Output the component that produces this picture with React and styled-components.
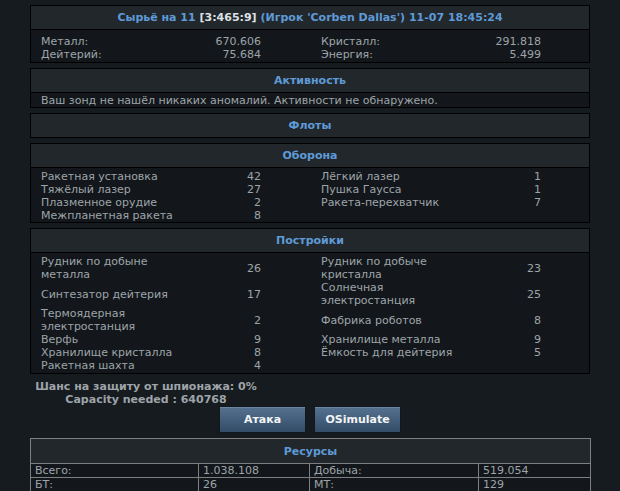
import React from 'react'
import styled, { createGlobalStyle } from 'styled-components'

const GlobalStyle = createGlobalStyle`
  html, body {
    margin: 0;
    padding: 0;
    background: #161b1f;
  }
  body {
    font-family: "DejaVu Sans", Verdana, sans-serif;
    font-size: 11px;
    color: #9ea4a9;
  }
`

const Page = styled.div`
  width: 560px;
  margin-left: 30px;
  padding-top: 5px;
  display: flex;
  flex-direction: column;
`

const Panel = styled.section`
  border: 1px solid #000;
  background: #13171b;
  margin-bottom: 5px;
`

const PanelHeader = styled.div`
  height: 23px;
  line-height: 23px;
  background: #22272c;
  text-align: center;
  font-weight: bold;
  color: #5e9ad6;

  span {
    color: #dde1e4;
  }
`

const PanelBody = styled.div`
  border-top: 1px solid #000;
  padding: ${p => p.$pad || '1px 0 0'};
  padding-left: 10px;
  line-height: 13px;
`

const StatGrid = styled.div`
  display: grid;
  grid-template-columns: 140px 80px 200px 80px;
  align-items: center;
`

const Label = styled.div`
  padding-left: ${p => (p.$second ? '60px' : '0')};
`

const Value = styled.div`
  text-align: right;
`

const Notes = styled.div`
  width: 232px;
  text-align: center;
  font-weight: bold;
  line-height: 13px;
  padding-top: 1px;
`

const ButtonRow = styled.div`
  display: flex;
  justify-content: center;
  gap: 8px;
  margin-bottom: 5px;
`

const Button = styled.button`
  width: 87px;
  height: 27px;
  padding: 0;
  border: 1px solid #101820;
  background: linear-gradient(#557290, #334c67);
  box-shadow: inset 0 1px 0 rgba(255, 255, 255, 0.15);
  color: #f2f4f6;
  font-family: "DejaVu Sans", Verdana, sans-serif;
  font-size: 11px;
  font-weight: bold;
  cursor: pointer;
`

const ResTable = styled.table`
  width: 560px;
  border-collapse: collapse;
  table-layout: fixed;
  border: 1px solid #7d7f81;
  background: #13171b;
  line-height: 13px;

  th {
    height: 24px;
    background: #22272c;
    color: #5e9ad6;
    font-weight: bold;
    border: 1px solid #7d7f81;
    padding: 0;
  }

  td {
    border: 1px solid #7d7f81;
    padding: 0 4px;
    text-align: left;
    font-weight: normal;
  }
`

const resources = [
  ['Металл:', '670.606', 'Кристалл:', '291.818'],
  ['Дейтерий:', '75.684', 'Энергия:', '5.499'],
]

const defense = [
  ['Ракетная установка', '42', 'Лёгкий лазер', '1'],
  ['Тяжёлый лазер', '27', 'Пушка Гаусса', '1'],
  ['Плазменное орудие', '2', 'Ракета-перехватчик', '7'],
  ['Межпланетная ракета', '8', '', ''],
]

const buildings = [
  ['Рудник по добыне металла', '26', 'Рудник по добыче кристалла', '23'],
  ['Синтезатор дейтерия', '17', 'Солнечная электростанция', '25'],
  ['Термоядерная электростанция', '2', 'Фабрика роботов', '8'],
  ['Верфь', '9', 'Хранилище металла', '9'],
  ['Хранилище кристалла', '8', 'Ёмкость для дейтерия', '5'],
  ['Ракетная шахта', '4', '', ''],
]

function Stats({ rows }) {
  return (
    <StatGrid>
      {rows.map((r, i) => (
        <React.Fragment key={i}>
          <Label>{r[0]}</Label>
          <Value>{r[1]}</Value>
          <Label $second>{r[2]}</Label>
          <Value>{r[3]}</Value>
        </React.Fragment>
      ))}
    </StatGrid>
  )
}

export default function App() {
  return (
    <>
      <GlobalStyle />
      <Page>
        <Panel>
          <PanelHeader>
            Сырьё на 11 <span>[3:465:9]</span> (Игрок 'Corben Dallas') 11-07 18:45:24
          </PanelHeader>
          <PanelBody $pad="5px 0 1px">
            <Stats rows={resources} />
          </PanelBody>
        </Panel>

        <Panel>
          <PanelHeader>Активность</PanelHeader>
          <PanelBody $pad="1px 0 0">
            Ваш зонд не нашёл никаких аномалий. Активности не обнаружено.
          </PanelBody>
        </Panel>

        <Panel>
          <PanelHeader>Флоты</PanelHeader>
        </Panel>

        <Panel>
          <PanelHeader>Оборона</PanelHeader>
          <PanelBody $pad="2px 0 0">
            <Stats rows={defense} />
          </PanelBody>
        </Panel>

        <Panel>
          <PanelHeader>Постройки</PanelHeader>
          <PanelBody $pad="2px 0 1px">
            <Stats rows={buildings} />
          </PanelBody>
        </Panel>

        <Notes>
          Шанс на защиту от шпионажа: 0%<br />
          Capacity needed : 640768
        </Notes>

        <ButtonRow>
          <Button>Атака</Button>
          <Button>OSimulate</Button>
        </ButtonRow>

        <ResTable>
          <colgroup>
            <col style={{ width: 168 }} />
            <col style={{ width: 111 }} />
            <col style={{ width: 169 }} />
            <col style={{ width: 112 }} />
          </colgroup>
          <thead>
            <tr>
              <th colSpan={4}>Ресурсы</th>
            </tr>
          </thead>
          <tbody>
            <tr>
              <td>Всего:</td>
              <td>1.038.108</td>
              <td>Добыча:</td>
              <td>519.054</td>
            </tr>
            <tr>
              <td>БТ:</td>
              <td>26</td>
              <td>МТ:</td>
              <td>129</td>
            </tr>
          </tbody>
        </ResTable>
      </Page>
    </>
  )
}
